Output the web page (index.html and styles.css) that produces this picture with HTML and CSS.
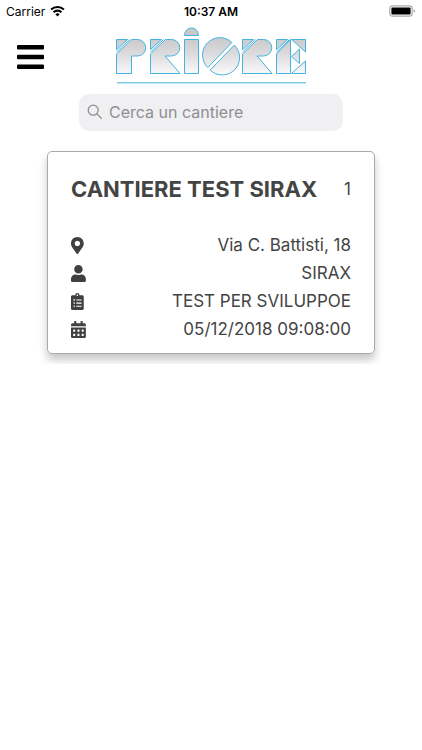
FILE: index.html
```html
<!DOCTYPE html>
<html lang="it">
<head>
<meta charset="utf-8">
<meta name="viewport" content="width=device-width, initial-scale=1">
<title>Cantieri</title>
<link rel="stylesheet" href="styles.css">
</head>
<body>
<div class="status">
  <span class="carrier">Carrier
    <svg class="wifi" viewBox="0 0 16 12" aria-hidden="true"><g fill="none" stroke="#000" stroke-width="2.2"><path d="M1.2 4.4a9.8 9.8 0 0 1 13.600 0"/><path d="M3.800 7.300a6 6 0 0 1 8.400 0"/></g><path d="M8 11.800 5.700 9.400a3.300 3.300 0 0 1 4.600 0z"/></svg>
  </span>
  <time class="clock">10:37 AM</time>
  <svg class="battery" viewBox="0 0 27 12" aria-hidden="true"><rect x=".8" y=".8" width="22.4" height="10.4" rx="2.6" fill="#fff" stroke="#aaa" stroke-width="1.2"/><rect x="2.400" y="2.400" width="19.200" height="7.200" rx="1"/><path d="M24.6 4.2q1.6.5 1.6 1.8t-1.6 1.8z" fill="#aaa"/></svg>
</div>
<header class="top">
  <button class="menu" type="button" aria-label="Menu">
    <svg viewBox="0 0 27 24" aria-hidden="true"><rect width="27" height="4.4" rx="1"/><rect y="9.8" width="27" height="4.4" rx="1"/><rect y="19.6" width="27" height="4.4" rx="1"/></svg>
  </button>
  <svg class="logo" viewBox="115 26 192 58" role="img" aria-label="Priore">
    <defs>
      <linearGradient id="metal" gradientUnits="userSpaceOnUse" x1="0" y1="38" x2="0" y2="74"><stop offset="0" stop-color="#c9c9cc"/><stop offset=".45" stop-color="#dcdcde"/><stop offset="1" stop-color="#fafafa"/></linearGradient>
      <g id="corner"><path d="M.5 39.500H11.500L.5 49.500z"/><path d="M.5 52 13.500 39.500"/></g>
      <g id="r"><use href="#corner"/><path d="M15.500 39.500H21.500a8.200 8.200 0 0 1 0 16.500h-6.500L30 73.500H.5V54z"/></g>
    </defs>
    <g fill="url(#metal)" stroke="#45b3df" stroke-width="1" stroke-linejoin="round">
      <g transform="translate(116)"><use href="#corner"/><path d="M15.500 39.500H21.500a8.200 8.200 0 0 1 0 16.500h-6v17.500H.5V54z"/></g>
      <use href="#r" x="150"/>
      <path d="M184.500 39.500h14v34h-14z"/>
      <path d="M184.500 35.500a7 7.600 0 0 1 14 0z"/>
      <path d="M231.900 42.500A17.200 17.200 0 0 0 207.800 67.500z"/>
      <path d="M234.300 45.100A17.200 17.200 0 0 1 210.200 70.100z"/>
      <use href="#r" x="242"/>
      <g transform="translate(276)"><use href="#corner"/><path d="M14.500 39.500v34H.5V54l14-14.500z"/></g>
      <path d="M291.500 39.500h14v12.500z"/>
      <path d="M291.500 56.500l8-7.500v14.500z"/>
      <path d="M291.500 73.500h14V61z"/>
    </g>
    <path d="M117 82.700H306" stroke="#7fcbe9" stroke-width="1.600"/>
  </svg>
</header>
<main>
  <label class="search">
    <svg viewBox="0 0 16 16" aria-hidden="true"><g fill="none" stroke="#8e8e93" stroke-width="1.3" stroke-linecap="round"><circle cx="6.2" cy="6.2" r="5"/><path d="m9.9 9.9 4.4 4.400"/></g></svg>
    <input type="search" placeholder="Cerca un cantiere" aria-label="Cerca un cantiere">
  </label>
  <article class="card">
    <div class="head"><h1>CANTIERE TEST SIRAX</h1><span>1</span></div>
    <ul class="rows">
      <li><svg viewBox="0 0 384 512" aria-hidden="true"><path d="M172.268 501.67C26.97 291.031 0 269.413 0 192 0 85.961 85.961 0 192 0s192 85.961 192 192c0 77.413-26.97 99.031-172.268 309.67-9.535 13.774-29.93 13.773-39.464 0zM192 272c44.183 0 80-35.817 80-80s-35.817-80-80-80-80 35.817-80 80 35.817 80 80 80z"/></svg><span>Via C. Battisti, 18</span></li>
      <li><svg viewBox="0 0 448 512" aria-hidden="true"><path d="M224 256c70.700 0 128-57.300 128-128S294.700 0 224 0 96 57.300 96 128s57.300 128 128 128zm89.600 32h-16.700c-22.200 10.200-46.900 16-72.900 16s-50.600-5.800-72.900-16h-16.700C60.200 288 0 348.200 0 422.400V464c0 26.500 21.500 48 48 48h352c26.500 0 48-21.500 48-48v-41.600c0-74.200-60.200-134.400-134.400-134.400z"/></svg><span>SIRAX</span></li>
      <li><svg viewBox="0 0 384 512" aria-hidden="true"><path fill-rule="evenodd" d="M336 64h-80c0-35.300-28.700-64-64-64s-64 28.700-64 64H48C21.500 64 0 85.500 0 112v352c0 26.500 21.500 48 48 48h288c26.500 0 48-21.500 48-48V112c0-26.500-21.500-48-48-48zM96 424a24 24 0 1 1 0-48 24 24 0 0 1 0 48zm0-96a24 24 0 1 1 0-48 24 24 0 0 1 0 48zm0-96a24 24 0 1 1 0-48 24 24 0 0 1 0 48zm96-192a24 24 0 1 1 0 48 24 24 0 0 1 0-48zm128 368a8 8 0 0 1-8 8H168a8 8 0 0 1-8-8v-16a8 8 0 0 1 8-8h144a8 8 0 0 1 8 8zm0-96a8 8 0 0 1-8 8H168a8 8 0 0 1-8-8v-16a8 8 0 0 1 8-8h144a8 8 0 0 1 8 8zm0-96a8 8 0 0 1-8 8H168a8 8 0 0 1-8-8v-16a8 8 0 0 1 8-8h144a8 8 0 0 1 8 8z"/></svg><span>TEST PER SVILUPPOE</span></li>
      <li><svg viewBox="0 0 448 512" aria-hidden="true"><path fill-rule="evenodd" d="M0 464c0 26.500 21.500 48 48 48h352c26.500 0 48-21.500 48-48V192H0zM320 268a12 12 0 0 1 12-12h40a12 12 0 0 1 12 12v40a12 12 0 0 1-12 12h-40a12 12 0 0 1-12-12zm0 128a12 12 0 0 1 12-12h40a12 12 0 0 1 12 12v40a12 12 0 0 1-12 12h-40a12 12 0 0 1-12-12zM192 268a12 12 0 0 1 12-12h40a12 12 0 0 1 12 12v40a12 12 0 0 1-12 12h-40a12 12 0 0 1-12-12zm0 128a12 12 0 0 1 12-12h40a12 12 0 0 1 12 12v40a12 12 0 0 1-12 12h-40a12 12 0 0 1-12-12zM64 268a12 12 0 0 1 12-12h40a12 12 0 0 1 12 12v40a12 12 0 0 1-12 12H76a12 12 0 0 1-12-12zm0 128a12 12 0 0 1 12-12h40a12 12 0 0 1 12 12v40a12 12 0 0 1-12 12H76a12 12 0 0 1-12-12zM400 64h-48V16a16 16 0 0 0-16-16h-32a16 16 0 0 0-16 16v48H160V16a16 16 0 0 0-16-16h-32a16 16 0 0 0-16 16v48H48C21.500 64 0 85.500 0 112v48h448v-48c0-26.500-21.500-48-48-48z"/></svg><span>05/12/2018 09:08:00</span></li>
    </ul>
  </article>
</main>
</body>
</html>
```
FILE: styles.css
```css
* { box-sizing: border-box; }
body {
  margin: 0;
  background: #fff;
  color: #444;
  font-family: Inter, "Liberation Sans", sans-serif;
  font-size: 17px;
}
.status {
  display: grid;
  grid-template-columns: 1fr auto 1fr;
  align-items: center;
  height: 22px;
  padding: 0 6px;
  color: #000;
  font-size: 12px;
}
.carrier { display: flex; align-items: center; gap: 5px; }
.wifi { width: 15px; height: 12px; }
.clock { font-weight: 600; }
.battery { width: 27px; height: 12px; justify-self: end; }
.top {
  display: grid;
  grid-template-columns: 1fr auto 1fr;
  align-items: end;
  padding: 4px 17px 0;
}
.menu {
  justify-self: start;
  padding: 0 0 15px;
  border: 0;
  background: none;
}
.menu svg { display: block; width: 27px; height: 24px; }
.logo { display: block; width: 192px; height: 58px; }
main {
  display: flex;
  flex-direction: column;
  gap: 20px;
  padding: 10px 47px;
}
.search {
  display: flex;
  align-items: center;
  gap: 6px;
  height: 37px;
  margin: 0 32px;
  padding: 0 8px 2px;
  border-radius: 10px;
  background: #f0f0f2;
}
.search svg { flex: none; width: 16px; height: 16px; }
.search input {
  flex: 1;
  min-width: 0;
  padding: 0;
  border: 0;
  outline: 0;
  background: none;
  color: #444;
  font: inherit;
  font-size: 16px;
}
.search input::placeholder { color: #8e8e93; opacity: 1; }
.card {
  padding: 23px 23px 10px;
  border: 1px solid #aaa;
  border-radius: 5px;
  box-shadow: 0 6px 8px rgba(0, 0, 0, 0.22);
}
.head {
  display: flex;
  align-items: center;
  justify-content: space-between;
  line-height: 28px;
}
h1 { margin: 0; font-size: 22px; font-weight: 700; }
.rows { margin: 28px 0 0; padding: 0; list-style: none; }
.rows li {
  display: flex;
  align-items: center;
  justify-content: space-between;
  line-height: 28px;
}
.rows svg { height: 17px; fill: #404040; }
```
